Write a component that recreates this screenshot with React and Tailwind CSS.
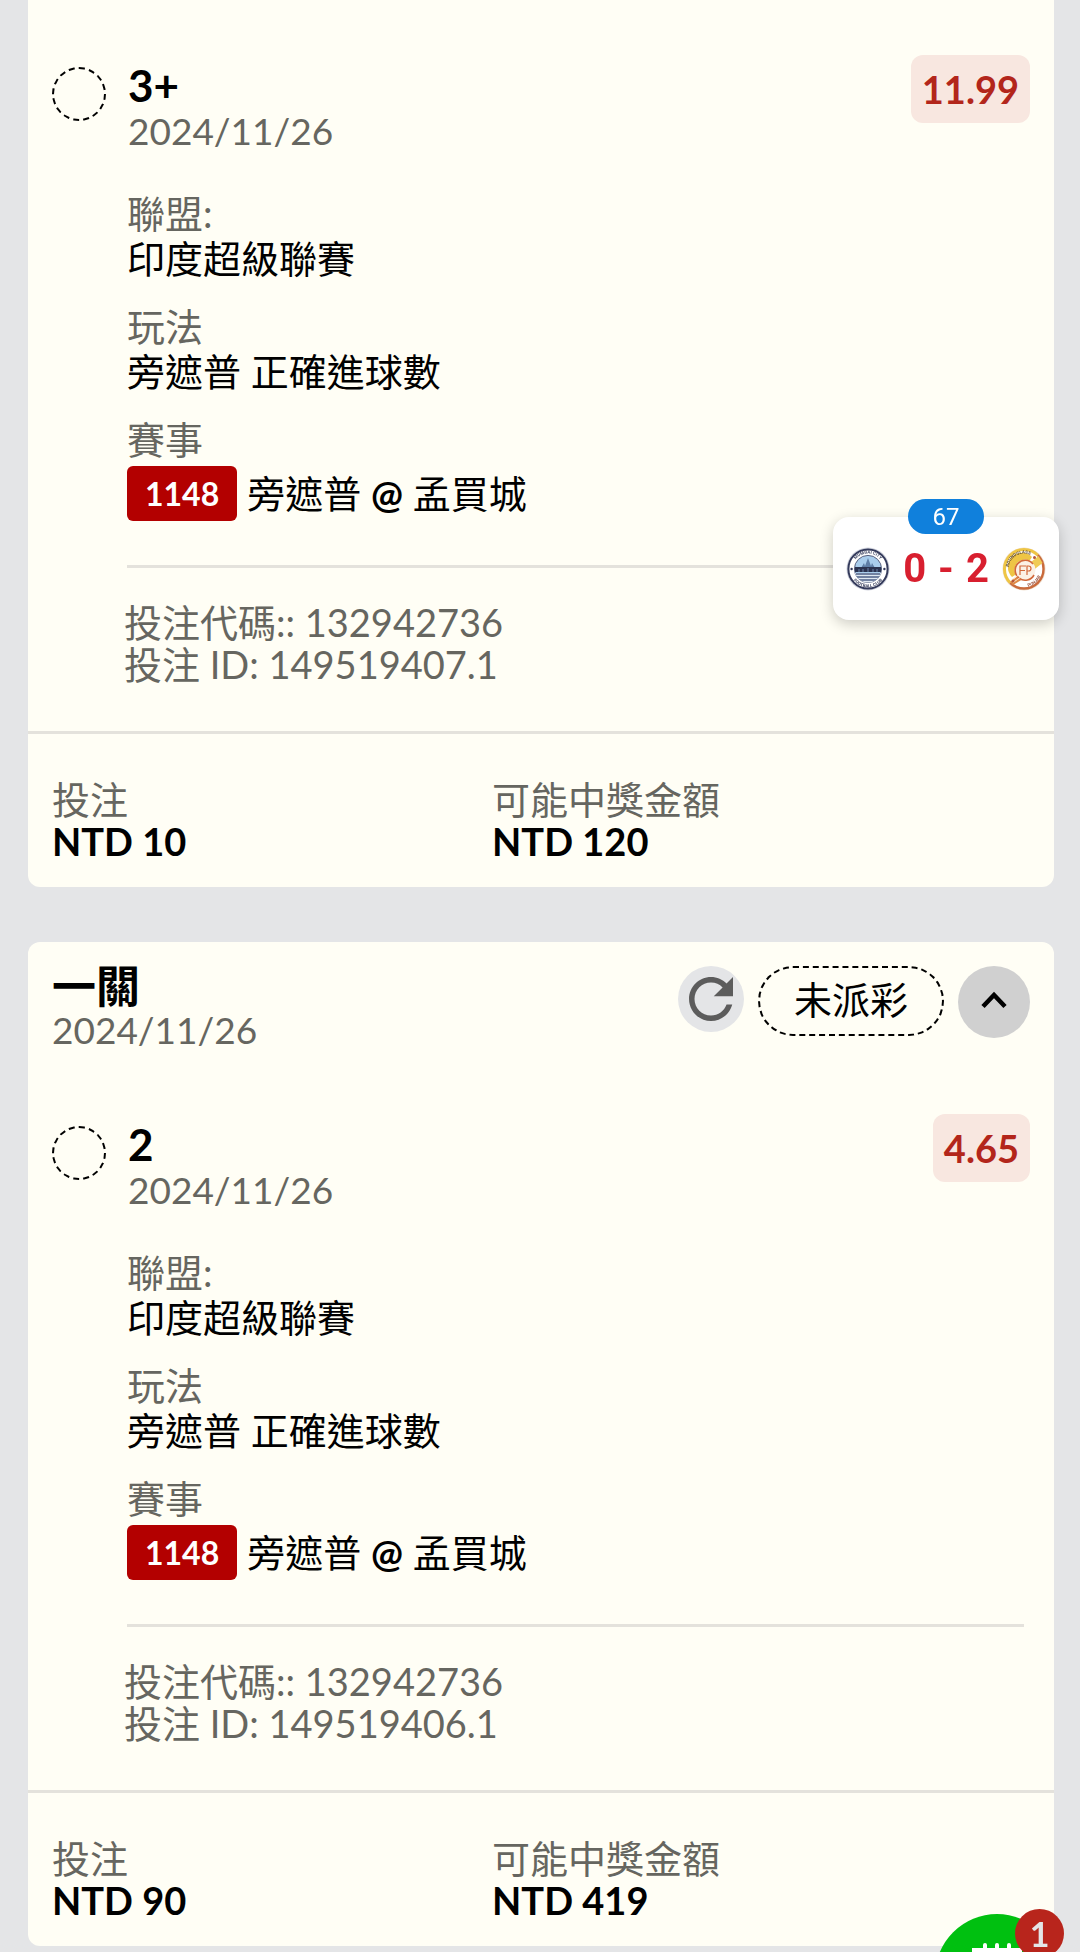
import React from "react";

const bets = [
  { id: "149519407.1", pick: "3+", odds: "11.99", stake: "NTD 10", payout: "NTD 120" },
  { id: "149519406.1", title: "一關", pick: "2", odds: "4.65", stake: "NTD 90", payout: "NTD 419" },
];

function MumbaiCrest() {
  return (
    <svg viewBox="0 0 44 44" className="size-11" role="img" aria-label="孟買城">
      <defs>
        <path id="mumbai-top" d="M6.5 22a15.5 15.5 0 0 1 31 0" />
        <path id="mumbai-bottom" d="M3.6 22a18.4 18.4 0 0 0 36.8 0" />
        <clipPath id="mumbai-clip"><circle cx="22" cy="22" r="13.6" /></clipPath>
      </defs>
      <circle cx="22" cy="22" r="21.5" fill="#cfd2dc" />
      <circle cx="22" cy="22" r="19.6" fill="#fff" stroke="#343a5b" strokeWidth="2" />
      <circle cx="22" cy="22" r="13.6" fill="#a9cdec" stroke="#59617f" strokeWidth="1" />
      <g clipPath="url(#mumbai-clip)">
        <path d="M7 26h30v12H7z" fill="#dfe8f1" />
        <path d="M15 21l3-5 1 3 3-8 3 8 1-3 3 5z" fill="#5f7ea6" />
        <path d="M9 20h26v5H9z" fill="#2b3350" />
        <path d="M10 27h24M10 30h24M13 33h18" stroke="#4d5f86" strokeWidth="1.4" />
        <path d="M13 22v3M17 22v3M22 21v4M27 22v3M31 22v3" stroke="#6d83a8" />
      </g>
      <circle cx="5.6" cy="22" r="1.2" fill="#343a5b" />
      <circle cx="38.4" cy="22" r="1.2" fill="#343a5b" />
      <g fill="#414764" fontFamily="Roboto, sans-serif" fontWeight="700" fontSize="4.4" textAnchor="middle">
        <text><textPath href="#mumbai-top" startOffset="50%">MUMBAI CITY</textPath></text>
        <text><textPath href="#mumbai-bottom" startOffset="50%">FOOTBALL CLUB</textPath></text>
      </g>
    </svg>
  );
}

function PunjabCrest() {
  return (
    <svg viewBox="0 0 44 44" className="size-11" role="img" aria-label="旁遮普">
      <defs>
        <path id="punjab-top" d="M6.8 24a15.4 15.4 0 0 1 25-14" />
        <path id="punjab-bottom" d="M20 40.2a18.2 18.2 0 0 0 20-17" />
      </defs>
      <circle cx="22" cy="22" r="21.5" fill="#efe0cf" />
      <circle cx="22" cy="22" r="19.5" fill="#fff" />
      <path d="M8.2 35.8A19.5 19.5 0 0 1 35.8 8.2" fill="none" stroke="#eec545" strokeWidth="3" />
      <path d="M35.8 8.2A19.5 19.5 0 0 1 8.2 35.8" fill="none" stroke="#c96a3c" strokeWidth="2.4" />
      <path d="M10 30A14 14 0 0 1 30 10L22 22z" fill="#eec545" />
      <path d="M36.5 9l4 7-9 7-5-6z" fill="#f0cb56" />
      <path d="M8 35l9-7 4 4-10 6z" fill="#e08a45" />
      <circle cx="23" cy="23" r="10.5" fill="#fbf1e6" />
      <path d="M31 17a10 10 0 1 0 1 11" fill="none" stroke="#d2683a" strokeWidth="1.6" />
      <path d="M18 28v-9h6M18 23.5h5M25 28v-9h1.500a2.500 2.500 0 0 1 0 5H25" fill="none" stroke="#d2683a" strokeWidth="1.2" />
      <path d="M9.5 33l7-5M11 35.5l8-5.500" stroke="#fbe6c8" />
      <circle cx="32.5" cy="10.5" r="1.5" fill="#b5553a" />
      <circle cx="11" cy="34" r="1.5" fill="#b5553a" />
      <g fontFamily="Roboto, sans-serif" fontWeight="700" fontSize="4.4" textAnchor="middle">
        <text fill="#5f4a33"><textPath href="#punjab-top" startOffset="50%">ROUNDGLASS</textPath></text>
        <text fill="#a05a45"><textPath href="#punjab-bottom" startOffset="50%">PUNJAB</textPath></text>
      </g>
    </svg>
  );
}

function Field({ label, children }) {
  return (
    <div>
      <dt className="text-[#666660]">{label}</dt>
      <dd>{children}</dd>
    </div>
  );
}

function CardHeader({ title }) {
  return (
    <header className="flex items-start justify-between pt-[22px] pb-[62px]">
      <div>
        <h2 className="text-[44px] leading-[44px] font-bold">{title}</h2>
        <p className="text-[37px] leading-[44px] text-[#666660]">2024/11/26</p>
      </div>
      <div className="mt-0.5 flex items-start gap-3.5">
        <button type="button" aria-label="重新整理" className="size-[66px] rounded-full bg-[#e4e5e7]">
          <svg viewBox="0 0 24 24" className="size-full" fill="#5c5c5c" aria-hidden="true">
            <path d="M17.65 6.35C16.2 4.9 14.21 4 12 4c-4.42 0-7.99 3.58-7.99 8s3.57 8 7.99 8c3.73 0 6.84-2.55 7.73-6h-2.08c-.82 2.33-3.04 4-5.65 4-3.31 0-6-2.69-6-6s2.69-6 6-6c1.66 0 3.14.69 4.22 1.78L13 11h7V4l-2.35 2.35z" />
          </svg>
        </button>
        <div className="flex h-[70px] items-center rounded-full border-2 border-dashed border-black px-[34px] pb-1">未派彩</div>
        <button type="button" aria-label="收合" className="flex size-[72px] items-center justify-center rounded-full bg-[#d0d0d0] pb-1">
          <svg viewBox="0 0 26 18" className="h-[18px] w-[26px]" aria-hidden="true">
            <path d="M2 15.5l11-11.500 11 11.500" fill="none" stroke="#000" strokeWidth="4.5" />
          </svg>
        </button>
      </div>
    </header>
  );
}

function BetCard({ bet }) {
  return (
    <article className={bet.title ? "rounded-xl bg-[#fffef5]" : "rounded-b-xl bg-[#fffef5] pt-[55px]"}>
      <div className="px-6">
        {bet.title && <CardHeader title={bet.title} />}
        <div className="flex items-start">
          <span className="mt-3 size-[54px] shrink-0 rounded-full border-2 border-dashed border-black" />
          <div className="ml-[22px] grow">
            <h3 className="mt-1.5 text-[44px] leading-[48px] font-bold">{bet.pick}</h3>
            <p className="text-[37px] leading-[44px] text-[#666660]">2024/11/26</p>
          </div>
          <span className="flex h-[68px] items-center rounded-xl bg-[#f8e7e0] px-[11px] font-bold text-[#b3261b]">{bet.odds}</span>
        </div>
        <dl className="mt-[38px] ml-[75px] flex flex-col gap-[23px]">
          <Field label="聯盟:">印度超級聯賽</Field>
          <Field label="玩法">旁遮普 正確進球數</Field>
          <Field label="賽事">
            <span className="mt-1 flex items-center gap-2.5">
              <span className="flex h-[55px] items-center rounded-md bg-[#b30000] px-[18px] text-[32px] font-bold text-white">1148</span>
              <span>旁遮普 <span className="font-bold">@</span> 孟買城</span>
            </span>
          </Field>
        </dl>
        <hr className="mt-11 mr-1.5 ml-[75px] border-t-[3px] border-[#e4e2dc]" />
        <div className="mt-[33px] ml-[72px] pb-[46px] leading-[42px] text-[#666660]">
          <p>投注代碼:: 132942736</p>
          <p>投注 ID: {bet.id}</p>
        </div>
      </div>
      <dl className="grid grid-cols-[9fr_11fr] border-t-[3px] border-[#e4e2dc] px-6 pt-11 pb-[25px] leading-[42px]">
        <div>
          <dt className="text-[#666660]">投注</dt>
          <dd className="font-bold">{bet.stake}</dd>
        </div>
        <div>
          <dt className="text-[#666660]">可能中獎金額</dt>
          <dd className="font-bold">{bet.payout}</dd>
        </div>
      </dl>
    </article>
  );
}

function LiveScore() {
  return (
    <aside className="fixed top-[517px] right-[21px] flex h-[103px] w-[226px] items-center justify-between rounded-2xl bg-white px-[13px] font-[Roboto,sans-serif] shadow-[0_4px_14px_rgba(0,0,0,0.2)]">
      <span className="absolute -top-[18px] left-1/2 flex h-[35px] w-[76px] -translate-x-1/2 items-center justify-center rounded-full bg-[#1080dc] text-2xl text-white">67</span>
      <MumbaiCrest />
      <span className="flex gap-3 text-[40px] leading-[44px] font-bold text-[#d81f2f]">
        <span>0</span><span>-</span><span>2</span>
      </span>
      <PunjabCrest />
    </aside>
  );
}

function BetSlipButton() {
  return (
    <button type="button" aria-label="投注單" className="fixed right-[21px] -bottom-[86px] flex size-[124px] items-start justify-center rounded-full bg-[#00c010] pt-[29px]">
      <svg viewBox="0 0 50 60" className="h-[60px] w-[50px]" aria-hidden="true">
        <path d="M0 5h50v55H0z" fill="#fff" />
        <path d="M13 2v6M25 2v6M37 2v6" stroke="#fff" strokeWidth="4" strokeLinecap="round" />
      </svg>
      <span className="absolute -top-[5px] -right-[5px] flex size-[49px] items-center justify-center rounded-full bg-[#b8251c] text-[34px] leading-none font-bold text-[#e4e5e7]">1</span>
    </button>
  );
}

export default function App() {
  return (
    <div className="min-h-screen bg-[#e4e5e7] pr-[26px] pb-1.5 pl-7 font-[Lato,'Noto_Sans_CJK_TC',sans-serif] text-[38px] leading-[45px] text-black" lang="zh-Hant">
      <main className="flex flex-col gap-[55px]">
        {bets.map((bet) => <BetCard key={bet.id} bet={bet} />)}
      </main>
      <LiveScore />
      <BetSlipButton />
    </div>
  );
}
